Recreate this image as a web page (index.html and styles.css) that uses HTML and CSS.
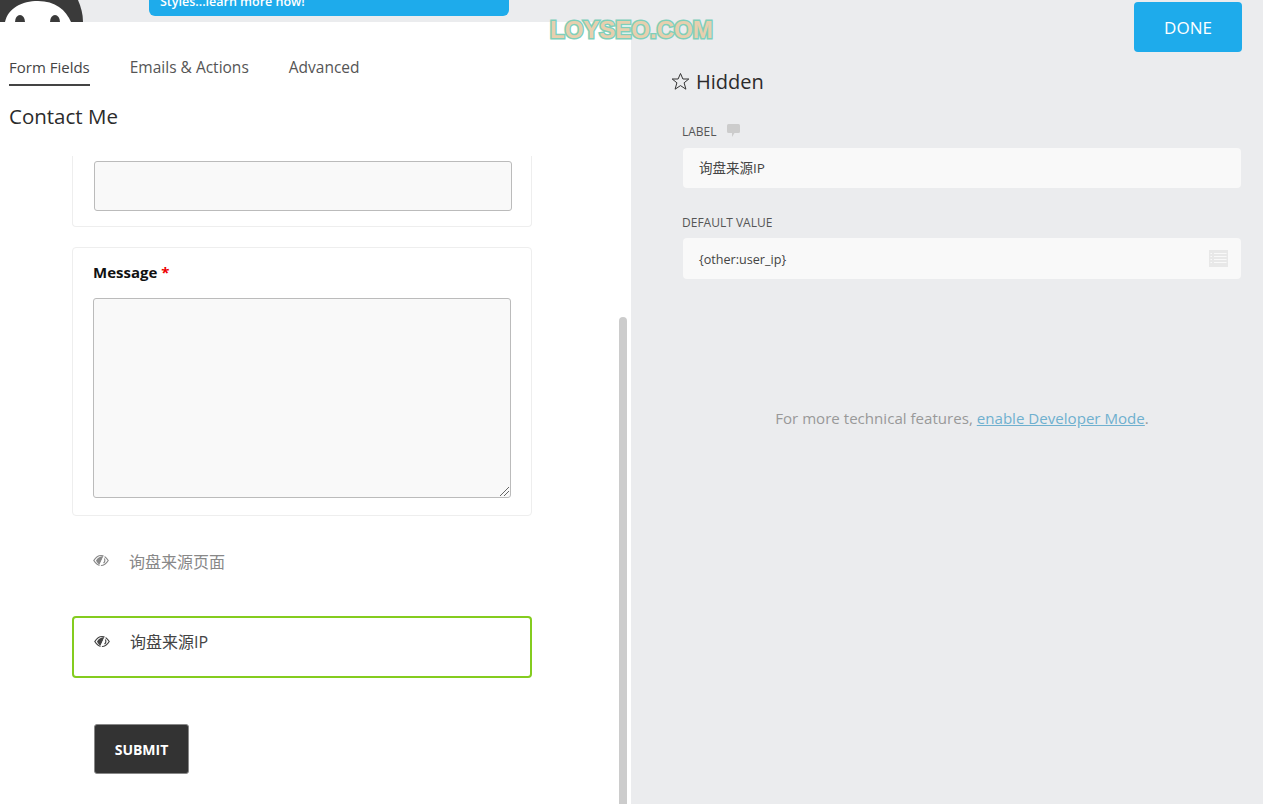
FILE: index.html
```html
<!DOCTYPE html>
<html lang="en">
  <head>
    <meta charset="UTF-8" />
    <title>Contact Me - Form Editor</title>
    <link rel="stylesheet" href="styles.css">
  </head>
  <body>
    <div class="page">
      <div class="left-col">
        <div class="topbar">
          <svg class="avatar" width="84" height="22" viewBox="0 0 84 22">
            <path d="M0 0H78C81 7 83 14 83 22H0Z" fill="#3a3a3a" />
            <path d="M5 22C8 8 22 1 38 1C55 1 66 10 71 22Z" fill="#fff" />
            <ellipse cx="20" cy="22" rx="5" ry="7" fill="#3a3a3a" />
            <ellipse cx="55" cy="22" rx="5" ry="7" fill="#3a3a3a" />
          </svg>
          <div class="banner">Styles...learn more now!</div>
        </div>

        <div class="panel">
          <div class="tabs">
            <div class="tab active">Form Fields</div>
            <div class="tab">Emails &amp; Actions</div>
            <div class="tab">Advanced</div>
          </div>
          <h1>Contact Me</h1>

          <div class="form-area">
            <div class="card card-cut">
              <div class="input-box"></div>
            </div>

            <div class="card card-message">
              <div class="field-label">Message <span class="required">*</span></div>
              <div class="textarea-box">
                <svg class="resize-grip" width="9" height="9" viewBox="0 0 9 9">
                  <path d="M0 9L9 0M4 9L9 4" stroke="#666" stroke-width="1" fill="none" />
                </svg>
              </div>
            </div>

            <div class="hidden-row">
              <svg class="eye-icon" width="16" height="13" viewBox="0 0 16 13">
                <path d="M0.800 6.500C3 3 5.500 1.500 8 1.500C10.500 1.500 13 3 15.200 6.500C13 10 10.500 11.500 8 11.500C5.500 11.500 3 10 0.800 6.500Z" fill="none" stroke="currentColor" stroke-width="1.200" />
                <path d="M3 6.500C4.500 4 6.500 2.500 10.500 2L6.500 10.500C5 10 4 8.500 3 6.500Z" fill="currentColor" />
                <path d="M11.800 0.500L6.800 12.500" stroke="#fff" stroke-width="1.200" />
                <path d="M10.500 9C12 8 12.300 6 11.300 4.500" fill="none" stroke="currentColor" stroke-width="1.200" />
              </svg>
              <span>询盘来源页面</span>
            </div>

            <div class="hidden-row selected">
              <svg class="eye-icon" width="16" height="13" viewBox="0 0 16 13">
                <path d="M0.800 6.500C3 3 5.500 1.500 8 1.500C10.500 1.500 13 3 15.200 6.500C13 10 10.500 11.500 8 11.500C5.500 11.500 3 10 0.800 6.500Z" fill="none" stroke="currentColor" stroke-width="1.200" />
                <path d="M3 6.500C4.500 4 6.500 2.500 10.500 2L6.500 10.500C5 10 4 8.500 3 6.500Z" fill="currentColor" />
                <path d="M11.800 0.500L6.800 12.500" stroke="#fff" stroke-width="1.200" />
                <path d="M10.500 9C12 8 12.300 6 11.300 4.500" fill="none" stroke="currentColor" stroke-width="1.200" />
              </svg>
              <span>询盘来源IP</span>
            </div>

            <button class="submit-button">SUBMIT</button>
          </div>

          <div class="scroll-thumb"></div>
        </div>
      </div>

      <div class="right-col">
        <div class="done-row">
          <button class="done-button">DONE</button>
        </div>

        <h2 class="settings-title">
          <svg width="19" height="19" viewBox="0 0 19 19">
            <path d="M9.500 1.500L11.900 7H17.800L13.100 10.800L14.900 17.200L9.500 13.600L4.100 17.200L5.900 10.800L1.200 7H7.100Z" fill="none" stroke="#333" stroke-width="1" stroke-linejoin="round" />
          </svg>
          Hidden
        </h2>

        <div class="settings">
          <div class="setting-label">
            LABEL
            <svg class="note-icon" width="13" height="13" viewBox="0 0 13 13">
              <path d="M1.500 0H11.500Q13 0 13 1.500V7.500Q13 9 11.500 9H7.500L5 13V9H1.500Q0 9 0 7.500V1.500Q0 0 1.500 0Z" fill="#ccc" />
            </svg>
          </div>
          <div class="setting-input">询盘来源IP</div>

          <div class="setting-label second">DEFAULT VALUE</div>
          <div class="setting-input tall">
            <span class="setting-value">{other:user_ip}</span>
            <svg width="19" height="17" viewBox="0 0 19 17">
              <rect width="19" height="17" fill="#e8e8e8" />
              <path d="M1.500 3.500H3M5 3.500H17.500M1.500 6.500H3M5 6.500H17.500M1.500 9.500H3M5 9.500H17.500M1.500 12.500H3M5 12.500H17.500" stroke="#f9f9f9" stroke-width="1.200" />
            </svg>
          </div>
        </div>

        <p class="dev-note">For more technical features, <a href="#">enable Developer Mode</a>.</p>
      </div>
    </div>

    <div class="watermark">LOYSEO.COM</div>
  </body>
</html>
```

FILE: styles.css
```css
:root {
  --gray-bg: #ebecee;
  --blue: #1eabeb;
  --text-color: #333;
  --border-color: #eeeeee;
  --font-family: "Open Sans", "Noto Sans CJK SC", sans-serif;
}

* {
  margin: 0;
  padding: 0;
  box-sizing: border-box;
}

html,
body {
  height: 100%;
  overflow: hidden;
}

body {
  font-family: var(--font-family);
  color: var(--text-color);
  background-color: var(--gray-bg);
}

.page {
  display: grid;
  grid-template-columns: 631px 1fr;
  height: 804px;
}

/* left column */
.left-col {
  display: flex;
  flex-direction: column;
  min-height: 0;
}

.topbar {
  display: flex;
  align-items: flex-end;
  height: 22px;
  flex-shrink: 0;
  overflow: hidden;
}

.avatar {
  display: block;
  flex-shrink: 0;
}

.banner {
  width: 360px;
  height: 40px;
  margin-left: 65px;
  margin-bottom: 6px;
  padding: 17px 11px 0;
  background-color: var(--blue);
  border-radius: 0 0 6px 6px;
  color: white;
  font-size: 12.5px;
  line-height: 18px;
  font-weight: 600;
  flex-shrink: 0;
}

.panel {
  position: relative;
  flex: 1;
  min-height: 0;
  overflow: hidden;
  background-color: white;
}

.tabs {
  display: flex;
  gap: 40px;
  height: 64px;
  padding: 33px 9px 0;
}

.tab {
  height: 31px;
  font-size: 15.5px;
  line-height: 24px;
  color: #555;
}

.tab.active {
  font-size: 15px;
  border-bottom: 2px solid #444;
  color: #444;
}

h1 {
  height: 70px;
  padding: 16px 9px 0;
  font-size: 20.5px;
  line-height: 28px;
  font-weight: 500;
  color: #2b2b2b;
}

.form-area {
  width: 460px;
  margin-left: 72px;
}

.card {
  border: 1px solid var(--border-color);
  border-radius: 4px;
}

.card-cut {
  height: 71px;
  padding: 5px 19px 0 21px;
  border-top: none;
  border-radius: 0 0 4px 4px;
}

.input-box {
  height: 50px;
  background-color: #f9f9f9;
  border: 1px solid #bbb;
  border-radius: 3px;
}

.card-message {
  height: 269px;
  margin-top: 20px;
  padding: 12px 20px 0;
}

.field-label {
  height: 38px;
  font-size: 15px;
  line-height: 24px;
  font-weight: 700;
  color: #111;
}

.required {
  color: #e00;
}

.textarea-box {
  position: relative;
  height: 200px;
  background-color: #f9f9f9;
  border: 1px solid #bbb;
  border-radius: 3px;
}

.resize-grip {
  position: absolute;
  right: 1px;
  bottom: 1px;
}

.hidden-row {
  display: flex;
  align-items: center;
  gap: 20px;
  height: 62px;
  margin-top: 20px;
  padding: 0 19px 13px 19px;
  border: 2px solid transparent;
  border-radius: 4px;
  color: #888;
  font-size: 16px;
}

.hidden-row.selected {
  margin-top: 18px;
  padding-left: 20px;
  padding-bottom: 12px;
  border-color: #84cc1f;
  color: #444;
}

.eye-icon {
  flex-shrink: 0;
}

.submit-button {
  display: block;
  width: 95px;
  height: 50px;
  margin: 46px 0 0 22px;
  background-color: #333;
  border: 1px solid #888;
  border-radius: 3px;
  color: white;
  font-family: var(--font-family);
  font-size: 14px;
  font-weight: 700;
}

.scroll-thumb {
  position: absolute;
  left: 619px;
  top: 295px;
  bottom: 0;
  width: 8px;
  background-color: #ccc;
  border-radius: 4px 4px 0 0;
}

/* right column */
.right-col {
  display: flex;
  flex-direction: column;
  padding-right: 21px;
}

.done-row {
  display: flex;
  justify-content: flex-end;
  padding-top: 2px;
}

.done-button {
  width: 108px;
  height: 50px;
  background-color: var(--blue);
  border: none;
  border-radius: 4px;
  color: white;
  font-family: var(--font-family);
  font-size: 17px;
}

.settings-title {
  display: flex;
  align-items: center;
  gap: 6px;
  height: 30px;
  margin: 14px 0 0 40px;
  font-size: 20px;
  font-weight: 500;
  color: #2b2b2b;
}

.settings {
  margin: 28px 1px 0 52px;
}

.setting-label {
  display: flex;
  align-items: center;
  gap: 10px;
  height: 16px;
  margin-bottom: 8px;
  margin-left: -1px;
  font-size: 12px;
  line-height: 16px;
  color: #555;
}

.setting-label.second {
  margin-top: 27px;
  margin-bottom: 7px;
}

.note-icon {
  margin-top: -4px;
}

.setting-input {
  display: flex;
  align-items: center;
  justify-content: space-between;
  height: 40px;
  padding: 0 13px 2px 16px;
  background-color: #f9f9f9;
  border-radius: 4px;
  font-size: 13.5px;
  color: #444;
}

.setting-input.tall {
  height: 41px;
  padding-bottom: 0;
  font-size: 12.6px;
}

.setting-value {
  padding-top: 2px;
}

.dev-note {
  margin: 129px 0 0 51px;
  font-size: 15.1px;
  line-height: 20px;
  text-align: center;
  color: #999;
}

.dev-note a {
  color: #6fb0cf;
}

.watermark {
  position: absolute;
  left: 550px;
  top: 16px;
  font-family: "Liberation Sans", sans-serif;
  font-size: 24px;
  line-height: 28px;
  font-weight: 700;
  color: #e8cfae;
  -webkit-text-stroke: 3px #7fcfba;
  paint-order: stroke fill;
}
```
